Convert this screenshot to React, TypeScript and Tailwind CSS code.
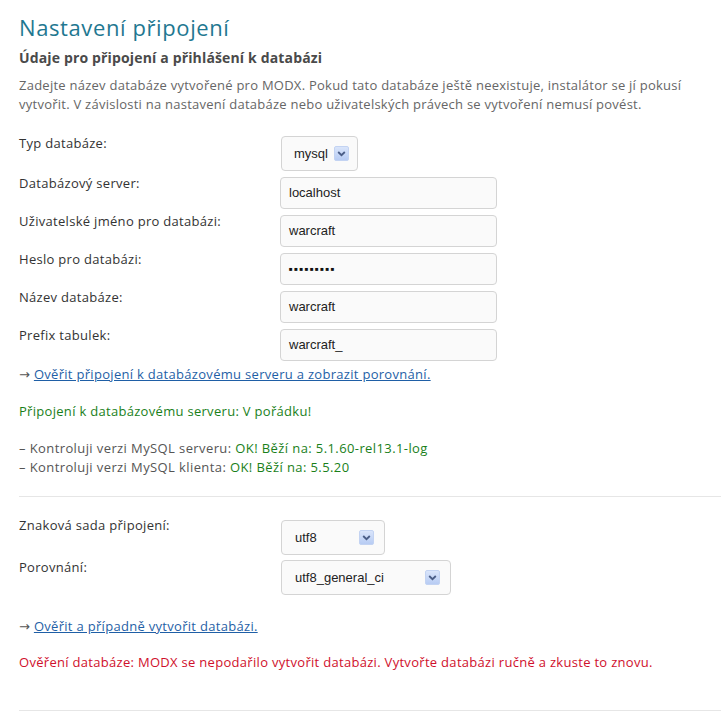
import React from "react";

const font = { fontFamily: '"Open Sans", "DejaVu Sans", sans-serif' };

function Arrow() {
  return (
    <svg width="15" height="15" viewBox="0 0 15 15" className="shrink-0">
      <defs>
        <linearGradient id="ag" x1="0" y1="0" x2="0" y2="1">
          <stop offset="0" stopColor="#dbe6fb" />
          <stop offset="1" stopColor="#b6cbf3" />
        </linearGradient>
      </defs>
      <rect x="0.5" y="0.5" width="14" height="14" rx="1.5" fill="url(#ag)" stroke="#c3d3f2" />
      <path d="M4.2 6 L7.5 9.2 L10.8 6" fill="none" stroke="#4a5d86" strokeWidth="1.8" />
    </svg>
  );
}

function Select({ value, width, gap }: { value: string; width: string; gap?: boolean }) {
  return (
    <div
      className={`${width} h-[35px] rounded-[4px] border border-[#d4d4d4] bg-[#fafafa] flex items-center ${gap ? "justify-between pl-[13px] pr-[10px]" : "pl-[12px] pr-[10px] gap-[6px]"} text-[13px] text-[#222] tracking-normal`}
      style={{ fontFamily: '"Liberation Sans", Arial, sans-serif' }}
    >
      <span>{value}</span>
      <Arrow />
    </div>
  );
}

function Input({ value, password }: { value: string; password?: boolean }) {
  return (
    <div
      className="w-[217px] h-[32px] rounded-[4px] border border-[#d4d4d4] bg-[#fafafa] flex items-center pl-[8px] text-[13px] text-[#222] tracking-normal"
      style={{ fontFamily: '"Liberation Sans", Arial, sans-serif' }}
    >
      {password ? (
        <span className="text-[6px] tracking-[1.6px] text-[#111]">■■■■■■■■■</span>
      ) : (
        value
      )}
    </div>
  );
}

function Row({ label, children, mt }: { label: string; children: React.ReactNode; mt: string }) {
  return (
    <div className="flex items-start pb-[3px]">
      <div className="w-[261px] leading-[18px] text-[13px] text-[#333]">{label}</div>
      <div className={mt}>{children}</div>
    </div>
  );
}

export default function App() {
  return (
    <div className="w-[721px] h-[717px] bg-white overflow-hidden tracking-[0.3px]" style={font}>
      <div className="pl-[19px] pt-[12px]">
        <h1 className="text-[22px] leading-[30px] text-[#1f7891] font-normal tracking-[0.6px]">Nastavení připojení</h1>
        <h2 className="mt-[6px] text-[14px] leading-[20px] font-bold text-[#4a4a4a] tracking-[0.15px]">
          Údaje pro připojení a přihlášení k databázi
        </h2>
        <p className="mt-[8px] text-[13px] leading-[19px] text-[#666] pr-[20px] tracking-[0.25px]">
          Zadejte název databáze vytvořené pro MODX. Pokud tato databáze ještě neexistuje, instalátor se jí pokusí
          vytvořit. V závislosti na nastavení databáze nebo uživatelských právech se vytvoření nemusí povést.
        </p>

        <div className="mt-[20px]">
          <Row label="Typ databáze:" mt="mt-[2px] ml-[1px]">
            <Select value="mysql" width="w-[77px]" />
          </Row>
          <Row label="Databázový server:" mt="mt-[3px]">
            <Input value="localhost" />
          </Row>
          <Row label="Uživatelské jméno pro databázi:" mt="mt-[3px]">
            <Input value="warcraft" />
          </Row>
          <Row label="Heslo pro databázi:" mt="mt-[3px]">
            <Input value="" password />
          </Row>
          <Row label="Název databáze:" mt="mt-[3px]">
            <Input value="warcraft" />
          </Row>
          <Row label="Prefix tabulek:" mt="mt-[3px]">
            <Input value="warcraft_" />
          </Row>
        </div>

        <div className="mt-[1px] text-[13px] leading-[18px] text-[#555]">
          → <a className="text-[#1f5fa6] underline">Ověřit připojení k databázovému serveru a zobrazit porovnání.</a>
        </div>

        <div className="mt-[19px] text-[13px] leading-[18px] text-[#1a7f1a]">
          Připojení k databázovému serveru: V pořádku!
        </div>

        <div className="mt-[19px] text-[13px] leading-[19px] text-[#555] tracking-[0.4px]">
          <div>
            – Kontroluji verzi MySQL serveru: <span className="text-[#1a7f1a]">OK! Běží na: 5.1.60-rel13.1-log</span>
          </div>
          <div>
            – Kontroluji verzi MySQL klienta: <span className="text-[#1a7f1a]">OK! Běží na: 5.5.20</span>
          </div>
        </div>

        <div className="mt-[19px] h-px bg-[#e6e6e6]" />

        <div className="mt-[19px]">
          <Row label="Znaková sada připojení:" mt="mt-[4px] ml-[1px]">
            <Select value="utf8" width="w-[104px]" gap />
          </Row>
          <Row label="Porovnání:" mt="mt-[2px] ml-[1px]">
            <Select value="utf8_general_ci" width="w-[170px]" gap />
          </Row>
        </div>

        <div className="mt-[19px] text-[13px] leading-[18px] text-[#555]">
          → <a className="text-[#1f5fa6] underline">Ověřit a případně vytvořit databázi.</a>
        </div>

        <div className="mt-[18px] text-[13px] leading-[18px] text-[#d0102c]">
          Ověření databáze: MODX se nepodařilo vytvořit databázi. Vytvořte databázi ručně a zkuste to znovu.
        </div>

        <div className="mt-[39px] h-px bg-[#e6e6e6]" />
      </div>
    </div>
  );
}
